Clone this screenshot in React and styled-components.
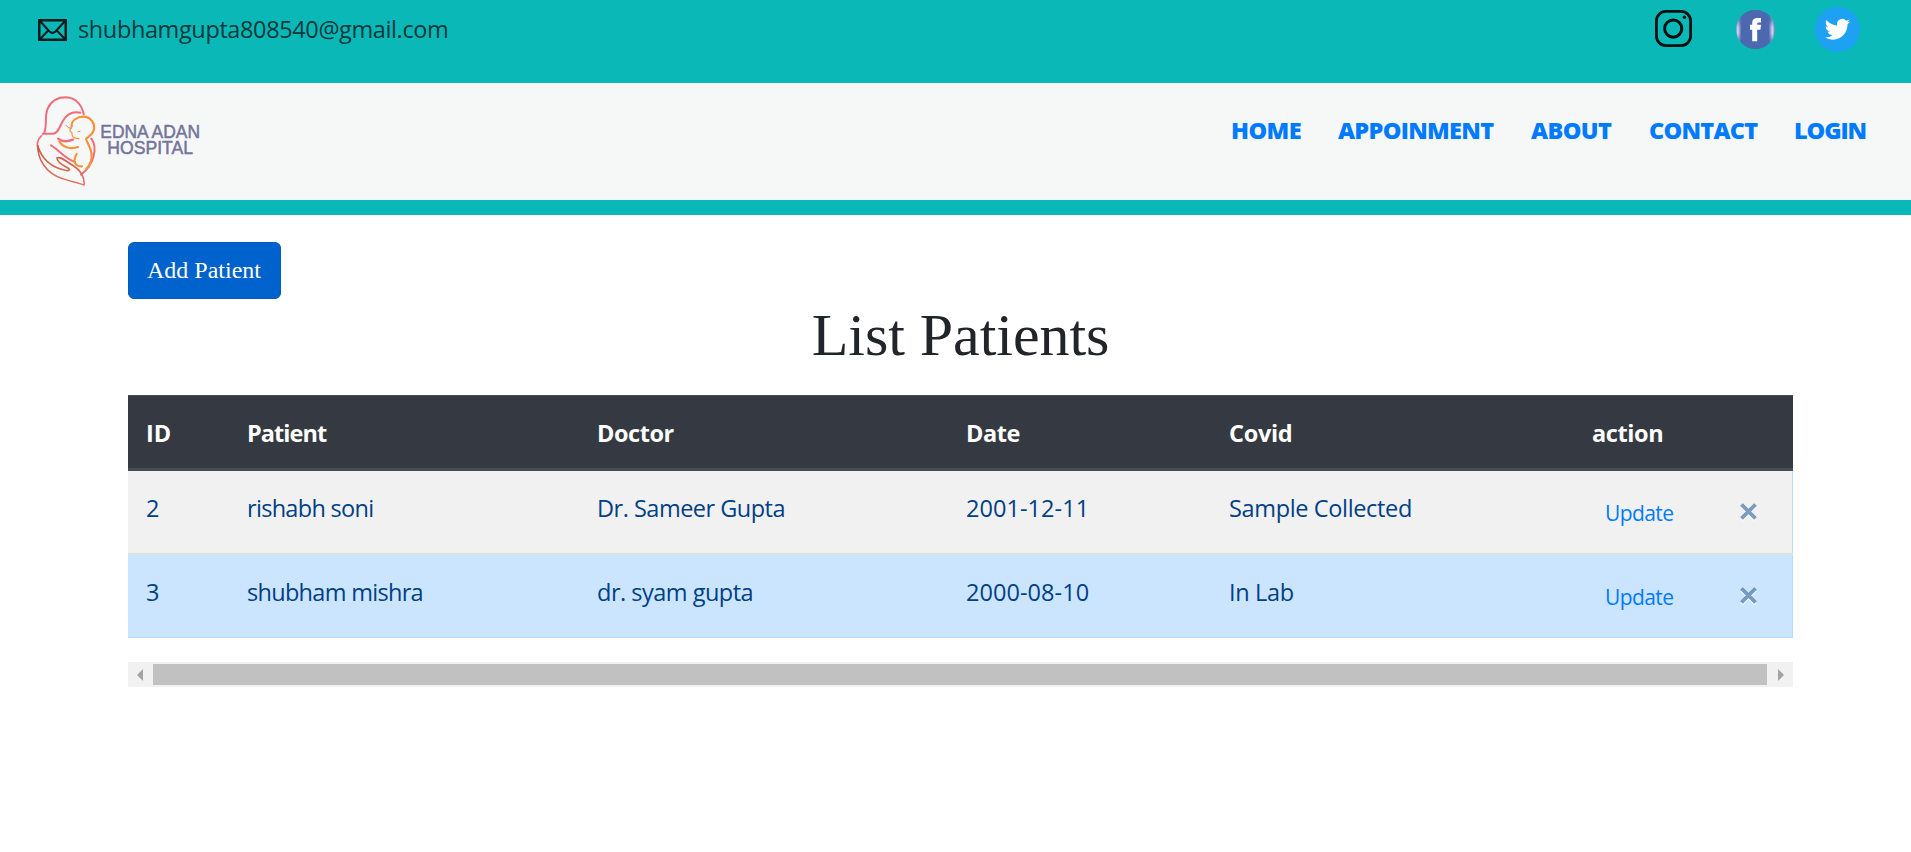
import React from "react";
import styled, { createGlobalStyle } from "styled-components";

const GlobalStyle = createGlobalStyle`
  * { box-sizing: border-box; }
  body {
    margin: 0;
    background: #fff;
    color: #212529;
    font-family: "Open Sans", "Noto Sans", sans-serif;
    font-size: 23.5px;
  }
`;

const TopBar = styled.div`
  display: flex;
  justify-content: space-between;
  height: 83px;
  padding: 7px 51px 0 38px;
  background: #0bb8b8;
`;

const Email = styled.a`
  display: flex;
  align-items: center;
  gap: 11px;
  height: 45px;
  color: #06383a;
  letter-spacing: -0.38px;
  line-height: 32px;
  text-decoration: none;
`;

const EmailText = styled.span`
  padding-bottom: 2px;
`;

const Socials = styled.div`
  display: flex;
  align-items: center;
  height: 45px;
`;

const SocialLink = styled.a`
  display: flex;
  margin-left: ${(p) => p.$gap || 0}px;
  margin-top: ${(p) => p.$shift || 0}px;
`;

const Header = styled.header`
  display: flex;
  justify-content: space-between;
  height: 132px;
  padding: 7px 0 0 30px;
  background: #f6f8f8;
  border-bottom: 15px solid #0bb8b8;
`;

const Nav = styled.nav`
  display: grid;
  grid-template-columns: 107px 193px 118px 145px 117px;
  height: 80px;
  align-items: center;
`;

const NavLink = styled.a`
  color: #007bff;
  font-weight: 800;
  letter-spacing: ${(p) => p.$track}px;
  text-decoration: none;
  white-space: nowrap;
`;

const Main = styled.main`
  width: 1665px;
  margin: 27px 0 0 128px;
`;

const AddButton = styled.button`
  display: block;
  width: 153px;
  height: 57px;
  padding: 0 1px 0 0;
  border: 1px solid #005cbf;
  border-radius: 6px;
  background: #0062cc;
  color: #fff;
  font: 24px "Liberation Serif", serif;
`;

const Title = styled.h1`
  margin: 0;
  height: 96px;
  font: 400 60px/72px "Liberation Serif", serif;
  letter-spacing: -0.05px;
  text-align: center;
`;

const Table = styled.div`
  width: 100%;
`;

const columns = "101px 350px 369px 263px 363px 147px 1fr";

const HeadRow = styled.div`
  display: grid;
  grid-template-columns: ${columns};
  align-items: center;
  height: 76px;
  padding-top: 2px;
  background: #353941;
  border-top: 1px solid #454d55;
  border-bottom: 3px solid #454d55;
  color: #fff;
`;

const HeadCell = styled.div`
  padding-left: 18px;
  font-size: 23.5px;
  font-weight: 750;
  letter-spacing: ${(p) => p.$track}px;
`;

const Row = styled.div`
  display: grid;
  grid-template-columns: ${columns};
  align-items: start;
  height: ${(p) => (p.$active ? 83 : 84)}px;
  background: ${(p) => (p.$active ? "#cce5ff" : "#f1f1f1")};
  border-bottom: ${(p) => (p.$active ? "1px solid #b8daff" : "2px solid #dee2e6")};
  box-shadow: inset -1px 0 #b8daff;
  color: #004085;
`;

const Cell = styled.div`
  padding: 19px 0 0 18px;
  line-height: 37px;
  letter-spacing: ${(p) => p.$track || 0}px;
  white-space: nowrap;
`;

const UpdateLink = styled.a`
  padding: 24px 0 0 31px;
  color: #007bff;
  font-size: 21px;
  line-height: 37px;
  letter-spacing: -0.6px;
  text-decoration: none;
`;

const RemoveButton = styled.button`
  justify-self: start;
  margin: 31px 0 0 18px;
  padding: 0;
  border: 0;
  background: none;
  line-height: 0;
`;

const Scrollbar = styled.div`
  display: flex;
  align-items: center;
  height: 25px;
  margin-top: 24px;
  padding: 0 9px;
  background: #f1f1f1;
`;

const Thumb = styled.div`
  flex: 1;
  height: 21px;
  margin: 0 11px 0 10px;
  background: #c1c1c1;
`;

const Arrow = styled.i`
  border: solid transparent;
  border-width: 6px 0;
  ${(p) => (p.$dir === "left" ? "border-right" : "border-left")}: 6px solid #a3a3a3;
`;

const EnvelopeIcon = () => (
  <svg width="29" height="22" viewBox="0 0 29 22" fill="none" stroke="#061b1c" strokeWidth="2.1">
    <path d="M1.2 1.2H27.8V20.8H1.2Z" strokeWidth="2.6" />
    <path d="M1.5 1.5L11.5 12.4Q14.5 15.2 17.5 12.4L27.5 1.5M1.5 20.5L10.5 11.3M27.5 20.5L18.5 11.3" />
  </svg>
);

const InstagramIcon = () => (
  <svg width="37" height="37" viewBox="0 0 37 37" fill="none" stroke="#051010" strokeWidth="2.8">
    <rect x="1.4" y="1.4" width="34.2" height="34.2" rx="9.5" />
    <circle cx="18.2" cy="18.6" r="8.6" strokeWidth="3" />
    <circle cx="29.4" cy="7.2" r="1.7" fill="#051010" stroke="none" />
  </svg>
);

const FacebookIcon = () => (
  <svg width="39" height="39" viewBox="0 0 39 39">
    <defs>
      <linearGradient id="fb">
        <stop offset="0" stopColor="#8b9bd3" />
        <stop offset=".05" stopColor="#d3d8f3" />
        <stop offset=".14" stopColor="#4c69b0" />
        <stop offset=".84" stopColor="#4c69b0" />
        <stop offset=".93" stopColor="#d3d8f3" />
        <stop offset="1" stopColor="#6d80c2" />
      </linearGradient>
      <linearGradient id="fbEdge" x1="0" y1="0" x2="0" y2="1">
        <stop offset="0" stopColor="#4c69b0" />
        <stop offset=".25" stopColor="#4c69b0" stopOpacity=".7" />
        <stop offset=".45" stopColor="#4c69b0" stopOpacity="0" />
        <stop offset=".6" stopColor="#4c69b0" stopOpacity="0" />
        <stop offset=".8" stopColor="#4c69b0" stopOpacity=".7" />
        <stop offset="1" stopColor="#4c69b0" />
      </linearGradient>
    </defs>
    <circle cx="19.5" cy="19.5" r="19.5" fill="url(#fb)" />
    <circle cx="19.5" cy="19.5" r="19.5" fill="url(#fbEdge)" />
    <path fill="#fff" d="M16.2 31.3V19.8H14V14.7H16.2V12.5C16.2 9.5 18.2 8 21.2 8H25V12.4H23C21.7 12.4 21.2 12.8 21.2 14V14.7H25L24.4 19.8H21.2V31.3Z" />
  </svg>
);

const TwitterIcon = () => (
  <svg width="45" height="45" viewBox="0 0 45 45">
    <circle cx="22.5" cy="22.5" r="22.5" fill="#1da1f2" />
    <path
      fill="#fff"
      transform="translate(9.7 9.6) scale(1.06)"
      d="M23.95 4.57a10 10 0 0 1-2.82.77 4.96 4.96 0 0 0 2.16-2.72c-.95.55-2 .96-3.13 1.19a4.92 4.92 0 0 0-8.38 4.48C7.69 8.1 4.07 6.13 1.64 3.16a4.92 4.92 0 0 0 1.52 6.57 4.9 4.9 0 0 1-2.23-.61v.06a4.92 4.92 0 0 0 3.95 4.83 4.9 4.9 0 0 1-2.21.08 4.94 4.94 0 0 0 4.6 3.42A9.87 9.87 0 0 1 0 19.54a14 14 0 0 0 7.55 2.21c9.05 0 14-7.5 14-13.98 0-.21 0-.42-.02-.63a9.94 9.94 0 0 0 2.46-2.55z"
    />
  </svg>
);

const Logo = () => (
  <svg width="175" height="100" viewBox="0 0 525 300" fill="none" strokeLinecap="round" strokeLinejoin="round">
    <defs>
      <linearGradient id="hand" x1="0" y1="0" x2="0" y2="1">
        <stop offset="0" stopColor="#cc5740" />
        <stop offset="1" stopColor="#e37565" />
      </linearGradient>
    </defs>
    <g stroke="#f06d7b" strokeWidth="6">
      <path d="M43 128C52 102 43 80 53 56C64 31 86 22 108 22C137 23 156 44 161 73" />
      <path d="M151 68C124 62 110 73 99 92C88 112 84 130 70 131H38" />
      <path d="M35 137C23 147 19 162 25 180" strokeWidth="5" />
      <path d="M84 146C96 155 114 155 129 149" strokeWidth="7" />
      <path d="M108 106L115 113L124 115" strokeWidth="3" />
      <path d="M63 166C87 180 103 205 135 216" />
      <path d="M184 146C203 172 194 222 153 254" />
    </g>
    <g stroke="url(#hand)">
      <path d="M24 167C22 207 48 251 98 266C122 275 143 277 162 285" strokeWidth="4.5" />
      <path d="M25 173C39 211 68 230 95 238C115 245 124 241 114 234C102 227 82 220 81 204C91 197 107 214 128 226C149 239 163 258 163 283" strokeWidth="5" />
    </g>
    <g stroke="#f99138" strokeWidth="6.5">
      <path d="M125 109C123 92 142 79 162 80C184 82 195 101 192 117C188 137 171 141 168 147C173 163 187 178 185 202C183 217 178 228 169 236" />
      <path d="M125 109C117 121 119 126 126 128C124 140 129 145 147 146" strokeWidth="3.5" />
      <path d="M144 125L150 124" strokeWidth="3" />
      <path d="M88 154C98 174 124 178 144 171" />
      <path d="M140 192C127 215 135 230 156 229" />
    </g>
    <g fill="#74759a" stroke="#74759a" strokeWidth="1.6" fontFamily='"Liberation Sans", Arial, sans-serif' fontSize="54">
      <text x="211" y="143" textLength="299" lengthAdjust="spacingAndGlyphs">EDNA ADAN</text>
      <text x="232" y="192" textLength="257" lengthAdjust="spacingAndGlyphs">HOSPITAL</text>
    </g>
  </svg>
);

const CrossIcon = () => (
  <svg width="19" height="21" viewBox="0 0 19 21" fill="none" strokeWidth="3.8">
    <path d="M2.5 4L16.5 18M16.5 4L2.5 18" stroke="#fff" strokeOpacity=".7" />
    <path d="M2.5 2.5L16.5 16.5M16.5 2.5L2.5 16.5" stroke="#004085" strokeOpacity=".5" />
  </svg>
);

const links = [
  ["HOME", -0.6],
  ["APPOINMENT", -0.7],
  ["ABOUT", -0.6],
  ["CONTACT", -0.75],
  ["LOGIN", -1.1],
];

const headings = [
  ["ID", 0],
  ["Patient", -0.95],
  ["Doctor", -0.45],
  ["Date", -0.45],
  ["Covid", -0.3],
  ["action", -0.4],
  ["", 0],
];

const patients = [
  { id: 2, name: "rishabh soni", doctor: "Dr. Sameer Gupta", date: "2001-12-11", covid: "Sample Collected" },
  { id: 3, name: "shubham mishra", doctor: "dr. syam gupta", date: "2000-08-10", covid: "In Lab", active: true },
];

export default function App() {
  return (
    <>
      <GlobalStyle />
      <TopBar>
        <Email>
          <EnvelopeIcon />
          <EmailText>shubhamgupta808540@gmail.com</EmailText>
        </Email>
        <Socials>
          <SocialLink $shift={-3}><InstagramIcon /></SocialLink>
          <SocialLink $gap={44}><FacebookIcon /></SocialLink>
          <SocialLink $gap={40}><TwitterIcon /></SocialLink>
        </Socials>
      </TopBar>
      <Header>
        <Logo />
        <Nav>
          {links.map(([label, track]) => (
            <NavLink key={label} $track={track}>{label}</NavLink>
          ))}
        </Nav>
      </Header>
      <Main>
        <AddButton>Add Patient</AddButton>
        <Title>List Patients</Title>
        <Table>
          <HeadRow>
            {headings.map(([label, track]) => (
              <HeadCell key={label} $track={track}>{label}</HeadCell>
            ))}
          </HeadRow>
          {patients.map((p) => (
            <Row key={p.id} $active={p.active}>
              <Cell>{p.id}</Cell>
              <Cell $track={-0.7}>{p.name}</Cell>
              <Cell $track={-0.5}>{p.doctor}</Cell>
              <Cell $track={0.05}>{p.date}</Cell>
              <Cell $track={-0.35}>{p.covid}</Cell>
              <UpdateLink>Update</UpdateLink>
              <RemoveButton aria-label="Remove"><CrossIcon /></RemoveButton>
            </Row>
          ))}
        </Table>
        <Scrollbar>
          <Arrow $dir="left" />
          <Thumb />
          <Arrow $dir="right" />
        </Scrollbar>
      </Main>
    </>
  );
}
